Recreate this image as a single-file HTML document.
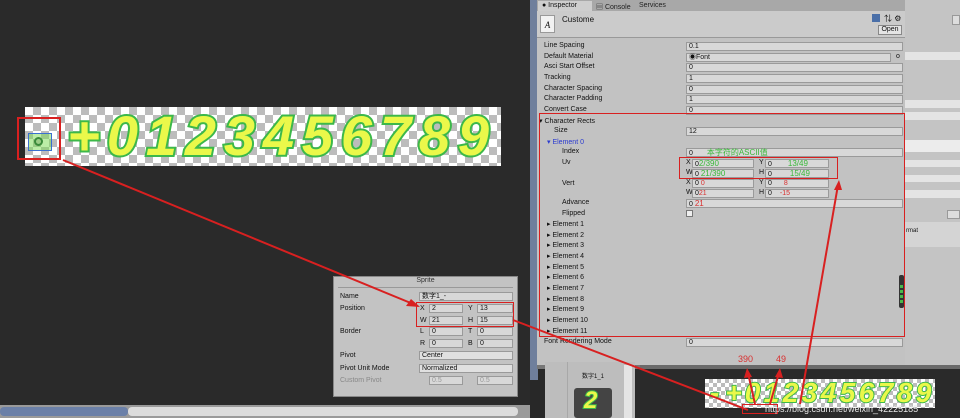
<!DOCTYPE html>
<html><head><meta charset="utf-8"><style>
*{margin:0;padding:0;box-sizing:border-box}
body{width:960px;height:418px;overflow:hidden;background:#282828;position:relative;font-family:"Liberation Sans","Noto Sans CJK SC",sans-serif;font-size:7px;color:#111}
.a{position:absolute}
.lbl{position:absolute;left:544px;font-size:7px;color:#111;white-space:nowrap}
.fld{position:absolute;left:686px;width:217px;height:9px;background:#d8d8d8;border:1px solid #9a9a9a;font-size:7px;padding-left:2px;line-height:7px}
.chk{background-image:linear-gradient(45deg,#bcbcbc 25%,transparent 25%,transparent 75%,#bcbcbc 75%),linear-gradient(45deg,#bcbcbc 25%,#fff 25%,#fff 75%,#bcbcbc 75%);background-size:16px 16px;background-position:0 0,8px 8px}
.dg{font-family:"Liberation Sans",sans-serif;font-weight:bold;font-style:italic;color:#eaf84a;-webkit-text-stroke:4px #3cb84a;paint-order:stroke fill;display:flex}
.dg span{display:inline-block;text-align:center}
.sf{position:absolute;height:9px;background:#d8d8d8;border:1px solid #9a9a9a;font-size:7px;padding-left:2px;line-height:7px}
</style></head><body>
<div class="a" style="left:0;top:0;width:530px;height:405px;background:#2a2a2a"></div>
<div class="a chk" style="left:25px;top:107px;width:476px;height:59px"></div>
<div class="a dg" style="left:64px;top:106px;height:60px;font-size:56px;line-height:60px">
<span style="width:39px">+</span><span style="width:39px">0</span><span style="width:39px">1</span><span style="width:39px">2</span><span style="width:39px">3</span><span style="width:39px">4</span><span style="width:39px">5</span><span style="width:39px">6</span><span style="width:39px">7</span><span style="width:39px">8</span><span style="width:39px">9</span></div>
<div class="a" style="left:28px;top:133px;width:24px;height:18px;border:1px solid #3a70d0;background:rgba(120,220,80,.5)"></div>
<div class="a" style="left:34px;top:137px;width:9px;height:9px;border-radius:50%;border:2px solid #3a8a3a"></div>
<div class="a" style="left:17px;top:117px;width:44px;height:43px;border:2px solid #d82020"></div>
<div class="a" style="left:0;top:405px;width:530px;height:13px;background:#9a9a9a"></div>
<div class="a" style="left:128px;top:407px;width:390px;height:9px;background:#dcdcdc;border-radius:4px"></div>
<div class="a" style="left:0;top:407px;width:128px;height:9px;background:#6b80a8;border-radius:4px"></div>
<div class="a" style="left:333px;top:276px;width:185px;height:121px;background:#c3c3c3;border:1px solid #888"></div>
<div class="a" style="left:333px;top:277px;width:185px;text-align:center;font-size:7px;color:#333">Sprite</div>
<div class="a" style="left:338px;top:287px;width:175px;height:1px;background:#999"></div>
<div class="a" style="left:340px;top:293px">Name</div>
<div class="sf" style="left:419px;top:292px;width:94px">数字1_-</div>
<div class="a" style="left:340px;top:305px">Position</div>
<div class="a" style="left:420px;top:305px">X</div><div class="sf" style="left:429px;top:304px;width:34px">2</div>
<div class="a" style="left:468px;top:305px">Y</div><div class="sf" style="left:477px;top:304px;width:36px">13</div>
<div class="a" style="left:420px;top:317px">W</div><div class="sf" style="left:429px;top:316px;width:34px">21</div>
<div class="a" style="left:468px;top:317px">H</div><div class="sf" style="left:477px;top:316px;width:36px">15</div>
<div class="a" style="left:416px;top:302px;width:98px;height:25px;border:1.5px solid #d82020"></div>
<div class="a" style="left:340px;top:328px">Border</div>
<div class="a" style="left:420px;top:328px">L</div><div class="sf" style="left:429px;top:327px;width:34px">0</div>
<div class="a" style="left:468px;top:328px">T</div><div class="sf" style="left:477px;top:327px;width:36px">0</div>
<div class="a" style="left:420px;top:340px">R</div><div class="sf" style="left:429px;top:339px;width:34px">0</div>
<div class="a" style="left:468px;top:340px">B</div><div class="sf" style="left:477px;top:339px;width:36px">0</div>
<div class="a" style="left:340px;top:352px">Pivot</div>
<div class="sf" style="left:419px;top:351px;width:94px;background:#e0e0e0">Center</div>
<div class="a" style="left:340px;top:365px">Pivot Unit Mode</div>
<div class="sf" style="left:419px;top:364px;width:94px;background:#e0e0e0">Normalized</div>
<div class="a" style="left:340px;top:377px;color:#888">Custom Pivot</div>
<div class="sf" style="left:429px;top:376px;width:34px;color:#999">0.5</div>
<div class="sf" style="left:477px;top:376px;width:36px;color:#999">0.5</div>

<div class="a" style="left:530px;top:0;width:8px;height:380px;background:#6f7f9c"></div>
<div class="a" style="left:905px;top:0;width:55px;height:365px;background:#c4c4c4"></div>
<div class="a" style="left:905px;top:52px;width:55px;height:8px;background:#e4e4e4"></div>
<div class="a" style="left:905px;top:100px;width:55px;height:8px;background:#e4e4e4"></div>
<div class="a" style="left:905px;top:112px;width:55px;height:8px;background:#e4e4e4"></div>
<div class="a" style="left:905px;top:140px;width:55px;height:12px;background:#ececec"></div>
<div class="a" style="left:905px;top:160px;width:55px;height:7px;background:#e4e4e4"></div>
<div class="a" style="left:905px;top:175px;width:55px;height:7px;background:#e4e4e4"></div>
<div class="a" style="left:905px;top:190px;width:55px;height:8px;background:#e4e4e4"></div>
<div class="a" style="left:905px;top:222px;width:55px;height:25px;background:#d4d4d4"></div>
<div class="a" style="left:906px;top:228px;font-size:6px">rmat</div>
<div class="a" style="left:947px;top:210px;width:13px;height:9px;background:#ddd;border:1px solid #999"></div>
<div class="a" style="left:952px;top:15px;width:8px;height:10px;background:#ddd;border:1px solid #999"></div>

<div class="a" style="left:537px;top:0;width:368px;height:365px;background:#c2c2c2"></div>
<div class="a" style="left:537px;top:0;width:368px;height:11px;background:#a8a8a8"></div>
<div class="a" style="left:538px;top:1px;width:54px;height:10px;background:#cecece"></div>
<div class="a" style="left:542px;top:2px;font-size:7px">● Inspector</div>
<div class="a" style="left:596px;top:2px;font-size:7px;color:#222">▤ Console</div>
<div class="a" style="left:639px;top:2px;font-size:7px;color:#222">Services</div>
<div class="a" style="left:537px;top:11px;width:368px;height:27px;background:#cbcbcb;border-bottom:1px solid #999"></div>
<div class="a" style="left:540px;top:15px;width:15px;height:18px;background:#f2f2f2;border:1px solid #999;font-family:'Liberation Serif',serif;font-style:italic;font-size:9px;text-align:center;line-height:18px">A</div>
<div class="a" style="left:562px;top:15px;font-size:8px">Custome</div>
<div class="a" style="left:872px;top:14px;width:8px;height:8px;background:#4a6fa8"></div>
<div class="a" style="left:884px;top:13px;font-size:8px">⇅ ⚙</div>
<div class="a" style="left:878px;top:25px;width:24px;height:10px;background:#e4e4e4;border:1px solid #888;font-size:7px;text-align:center;line-height:8px">Open</div>

<div class="lbl" style="top:42px">Line Spacing</div><div class="fld" style="top:42px">0.1</div>
<div class="lbl" style="top:53px">Default Material</div><div class="fld" style="top:53px;width:205px">◉Font</div><div class="a" style="left:896px;top:53px">o</div>
<div class="lbl" style="top:63px">Asci Start Offset</div><div class="fld" style="top:63px">0</div>
<div class="lbl" style="top:74px">Tracking</div><div class="fld" style="top:74px">1</div>
<div class="lbl" style="top:85px">Character Spacing</div><div class="fld" style="top:85px">0</div>
<div class="lbl" style="top:95px">Character Padding</div><div class="fld" style="top:95px">1</div>
<div class="lbl" style="top:106px">Convert Case</div><div class="fld" style="top:106px">0</div>
<div class="lbl" style="top:117px;left:539px">▾ Character Rects</div>
<div class="lbl" style="top:127px;left:554px">Size</div><div class="fld" style="top:127px">12</div>
<div class="lbl" style="top:138px;left:547px;color:#2a3ad0">▾ Element 0</div>
<div class="lbl" style="top:148px;left:562px">Index</div><div class="fld" style="top:148px">0 <span style="color:#3ab83a;font-size:8px;margin-left:12px">本字符的ASCII值</span></div>
<div class="lbl" style="top:159px;left:562px">Uv</div>
<div class="a" style="left:686px;top:159px">X</div><div class="fld" style="top:159px;left:692px;width:62px">0<span style="color:#3ab83a;font-size:8px">2/390</span></div>
<div class="a" style="left:759px;top:159px">Y</div><div class="fld" style="top:159px;left:765px;width:64px">0<span style="color:#3ab83a;font-size:8px;margin-left:16px">13/49</span></div>
<div class="a" style="left:686px;top:169px">W</div><div class="fld" style="top:169px;left:692px;width:62px">0 <span style="color:#3ab83a;font-size:8px">21/390</span></div>
<div class="a" style="left:759px;top:169px">H</div><div class="fld" style="top:169px;left:765px;width:64px">0<span style="color:#3ab83a;font-size:8px;margin-left:18px">15/49</span></div>
<div class="a" style="left:679px;top:157px;width:159px;height:22px;border:1.5px solid #d82020"></div>
<div class="lbl" style="top:180px;left:562px">Vert</div>
<div class="a" style="left:686px;top:179px">X</div><div class="fld" style="top:179px;left:692px;width:62px">0 <span style="color:#d83030">0</span></div>
<div class="a" style="left:759px;top:179px">Y</div><div class="fld" style="top:179px;left:765px;width:64px">0<span style="color:#d83030;margin-left:12px">8</span></div>
<div class="a" style="left:686px;top:189px">W</div><div class="fld" style="top:189px;left:692px;width:62px">0<span style="color:#d83030">21</span></div>
<div class="a" style="left:759px;top:189px">H</div><div class="fld" style="top:189px;left:765px;width:64px">0<span style="color:#d83030;margin-left:8px">-15</span></div>
<div class="lbl" style="top:199px;left:562px">Advance</div><div class="fld" style="top:199px">0 <span style="color:#d83030;font-size:8px">21</span></div>
<div class="lbl" style="top:210px;left:562px">Flipped</div><div class="a" style="left:686px;top:210px;width:7px;height:7px;background:#eee;border:1px solid #777"></div>
<div class="lbl" style="top:220px;left:547px">▸ Element 1</div>
<div class="lbl" style="top:231px;left:547px">▸ Element 2</div>
<div class="lbl" style="top:241px;left:547px">▸ Element 3</div>
<div class="lbl" style="top:252px;left:547px">▸ Element 4</div>
<div class="lbl" style="top:263px;left:547px">▸ Element 5</div>
<div class="lbl" style="top:273px;left:547px">▸ Element 6</div>
<div class="lbl" style="top:284px;left:547px">▸ Element 7</div>
<div class="lbl" style="top:295px;left:547px">▸ Element 8</div>
<div class="lbl" style="top:305px;left:547px">▸ Element 9</div>
<div class="lbl" style="top:316px;left:547px">▸ Element 10</div>
<div class="lbl" style="top:327px;left:547px">▸ Element 11</div>
<div class="lbl" style="top:338px">Font Rendering Mode</div><div class="fld" style="top:338px">0</div>
<div class="a" style="left:539px;top:113px;width:366px;height:224px;border:1.5px solid #d82020"></div>
<div class="a" style="left:899px;top:275px;width:5px;height:33px;background:#333;border-radius:2px"></div>
<div class="a" style="left:900px;top:285px;width:3px;height:20px;background:repeating-linear-gradient(#4ab84a 0 3px,#333 3px 5px)"></div>

<div class="a" style="left:537px;top:365px;width:423px;height:4px;background:#777"></div>
<div class="a" style="left:545px;top:362px;width:90px;height:56px;background:#bdbdbd"></div>
<div class="a" style="left:567px;top:362px;width:1px;height:56px;background:#a8a8a8"></div>
<div class="a" style="left:582px;top:371px;font-size:6px">数字1_1</div>
<div class="a" style="left:574px;top:388px;width:38px;height:30px;background:#444;border-radius:3px"></div>
<div class="a dg" style="left:584px;top:387px;font-size:24px;-webkit-text-stroke:2px #3cb84a">2</div>
<div class="a" style="left:624px;top:365px;width:8px;height:53px;background:#e4e4e4"></div>
<div class="a" style="left:636px;top:369px;width:324px;height:49px;background:#2a2a2a"></div>
<div class="a" style="left:640px;top:365px;width:320px;height:4px;background:#6a6a6a"></div>
<div class="a chk" style="left:705px;top:379px;width:230px;height:29px;background-size:8px 8px;background-position:0 0,4px 4px"></div>
<div class="a dg" style="left:705px;top:378px;height:30px;font-size:28px;line-height:30px;-webkit-text-stroke:2px #3cb84a">
<span style="width:19px">-</span><span style="width:19px">+</span><span style="width:19px">0</span><span style="width:19px">1</span><span style="width:19px">2</span><span style="width:19px">3</span><span style="width:19px">4</span><span style="width:19px">5</span><span style="width:19px">6</span><span style="width:19px">7</span><span style="width:19px">8</span><span style="width:19px">9</span></div>
<div class="a" style="left:742px;top:404px;width:36px;height:10px;border:1.5px solid #d82020"></div>
<div class="a" style="left:765px;top:404px;font-size:9px;color:#e8e8e8;white-space:nowrap">https://blog.csdn.net/weixin_42225185</div>
<div class="a" style="left:738px;top:354px;font-size:9px;color:#d83030">390</div>
<div class="a" style="left:776px;top:354px;font-size:9px;color:#d83030">49</div>

<svg class="a" style="left:0;top:0" width="960" height="418">
<g stroke="#d82020" stroke-width="2" fill="none">
<line x1="63" y1="160" x2="418" y2="306"/>
<line x1="513" y1="320" x2="748" y2="410"/>
<line x1="755" y1="404" x2="748" y2="373"/>
<line x1="770" y1="404" x2="779" y2="373"/>
<line x1="800" y1="404" x2="838" y2="185"/>
</g>
<g fill="#d82020">
<polygon points="420,307 406,306 411,299"/>
<polygon points="747,368 744,378 752,377"/>
<polygon points="780,368 775,377 783,378"/>
<polygon points="839,180 834,190 842,190"/>
</g>
</svg>
</body></html>
